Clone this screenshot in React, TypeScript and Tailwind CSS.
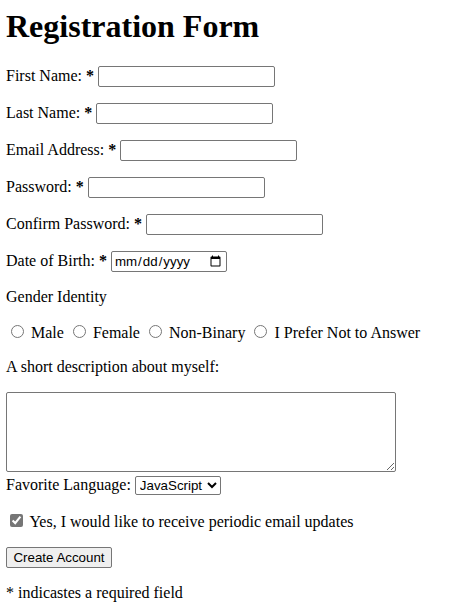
import React from "react";

const inputCls =
  "h-[21px] border border-[#767676] rounded-[2px] px-[2px] py-[1px] bg-white font-['Liberation_Sans',Arial,sans-serif] text-[13.333px] leading-[normal] text-black align-baseline";

export default function App() {
  return (
    <div className="pt-2 pl-[6px] font-['Liberation_Serif','Times_New_Roman',serif] text-[16px] leading-[normal] text-black bg-white min-h-screen">
      <h1 className="text-[32px] font-bold leading-[normal] mb-[21.44px]">Registration Form</h1>
      <form onSubmit={(e) => e.preventDefault()}>
        <p className="my-4">
          <label>
            First Name: <b>*</b> <input type="text" className={`${inputCls} w-[177px]`} />
          </label>
        </p>
        <p className="my-4">
          <label>
            Last Name: <b>*</b> <input type="text" className={`${inputCls} w-[177px]`} />
          </label>
        </p>
        <p className="my-4">
          <label>
            Email Address: <b>*</b> <input type="email" className={`${inputCls} w-[177px]`} />
          </label>
        </p>
        <p className="my-4">
          <label>
            Password: <b>*</b> <input type="password" className={`${inputCls} w-[177px]`} />
          </label>
        </p>
        <p className="my-4">
          <label>
            Confirm Password: <b>*</b> <input type="password" className={`${inputCls} w-[177px]`} />
          </label>
        </p>
        <p className="my-4">
          <label>
            Date of Birth: <b>*</b> <input type="date" className={`${inputCls} w-[116px]`} />
          </label>
        </p>
        <p className="my-4">Gender Identity</p>
        <p className="my-4">
          <input type="radio" name="g" id="male" className="ml-[5px] mr-[3px] mt-[3px]" />
          <label htmlFor="male"> Male</label>{" "}
          <input type="radio" name="g" id="female" className="ml-[5px] mr-[3px] mt-[3px]" />
          <label htmlFor="female"> Female</label>{" "}
          <input type="radio" name="g" id="nb" className="ml-[5px] mr-[3px] mt-[3px]" />
          <label htmlFor="nb"> Non-Binary</label>{" "}
          <input type="radio" name="g" id="na" className="ml-[5px] mr-[3px] mt-[3px]" />
          <label htmlFor="na"> I Prefer Not to Answer</label>
        </p>
        <p className="my-4">A short description about myself:</p>
        <div>
          <textarea className="w-[390px] h-[80px] border border-[#767676] rounded-[2px] p-[2px] bg-white align-baseline font-['Liberation_Mono',monospace] text-[13.333px]" />
          <br />
          <label>
            Favorite Language:{" "}
            <select
              defaultValue="JavaScript"
              className="w-[86px] h-[19px] border border-[#767676] rounded-[2px] bg-white font-['Liberation_Sans',Arial,sans-serif] text-[13.333px] leading-[normal] text-black align-baseline"
            >
              <option>JavaScript</option>
              <option>Python</option>
              <option>Java</option>
            </select>
          </label>
        </div>
        <p className="my-4">
          <input type="checkbox" id="upd" defaultChecked className="ml-[4px] mr-[3px] my-[3px] accent-[#767676]" />
          <label htmlFor="upd"> Yes, I would like to receive periodic email updates</label>
        </p>
        <p className="my-4">
          <button
            type="submit"
            className="w-[106px] h-[21px] px-[6px] py-[1px] border border-[#767676] rounded-[2px] bg-[#efefef] font-['Liberation_Sans',Arial,sans-serif] text-[13.333px] leading-[normal] text-black"
          >
            Create Account
          </button>
        </p>
        <p className="my-4">* indicastes a required field</p>
      </form>
    </div>
  );
}
